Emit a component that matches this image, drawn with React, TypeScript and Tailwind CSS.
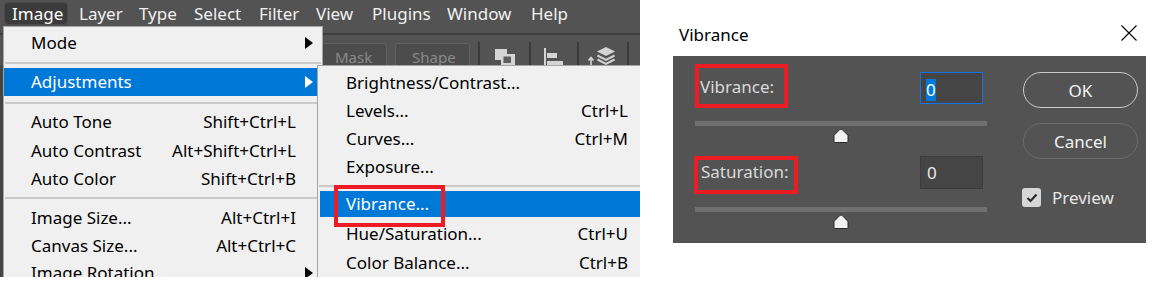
import type { ReactNode } from 'react';

const Arrow = ({ white }: { white?: boolean }) => (
  <svg width="8" height="12" viewBox="0 0 8 12">
    <polygon points="0,0 8,6 0,12" fill={white ? '#ffffff' : '#000000'} />
  </svg>
);

const Thumb = () => (
  <svg width="16" height="15" viewBox="0 0 16 15">
    <path
      d="M6.7 1.6 Q8 0.3 9.3 1.6 L15 7.4 V13.5 Q15 14.5 14 14.5 H2 Q1 14.5 1 13.5 V7.4 Z"
      fill="#f2f2f2"
      stroke="#2a2a2a"
      strokeWidth="1"
    />
  </svg>
);

type RowProps = {
  label: string;
  shortcut?: string;
  arrow?: boolean;
  active?: boolean;
  h: string;
};

const MenuRow = ({ label, shortcut, arrow, active, h }: RowProps) => (
  <div
    className={`${h} flex items-center pl-[27px] pr-[9px] ${
      active ? 'bg-[#0078d7] text-white' : 'text-black'
    }`}
  >
    <span className="flex-1 whitespace-nowrap">{label}</span>
    <span className="whitespace-nowrap">{shortcut}</span>
    <span className="w-[8px] ml-[9px] flex items-center">{arrow && <Arrow white={active} />}</span>
  </div>
);

const SubRow = ({ label, shortcut, h, children }: { label: string; shortcut?: string; h: string; children?: ReactNode }) => (
  <div className={`${h} flex items-center pl-[28px] pr-[18px] text-black`}>
    <span className="flex-1 whitespace-nowrap">{label}</span>
    <span className="whitespace-nowrap">{shortcut}</span>
    {children}
  </div>
);

const Sep = ({ h, top }: { h: string; top: string }) => (
  <div className={`${h} ${top}`}>
    <div className="h-[2px] mx-[1px] bg-[#cacaca]" />
  </div>
);

const barItems = [
  { t: 'Layer', w: 'w-[60px]' },
  { t: 'Type', w: 'w-[55px]' },
  { t: 'Select', w: 'w-[65px]' },
  { t: 'Filter', w: 'w-[57px]' },
  { t: 'View', w: 'w-[56px]' },
  { t: 'Plugins', w: 'w-[75px]' },
  { t: 'Window', w: 'w-[84px]' },
  { t: 'Help', w: 'w-[50px]' },
];

function PhotoshopMenu() {
  return (
    <div className="relative w-[640px] h-[277px] shrink-0 bg-[#535353] overflow-hidden flex flex-col">
      {/* menu bar */}
      <div className="h-[33px] flex items-start pt-[2px] pl-[4px] text-[17px] text-[#f0f0f0]">
        <span className="w-[64px] mr-[3px] h-[23px] flex items-center pl-[7px] rounded-[4px] bg-[#3b3b3b] border border-[#4b4b4b] text-white">
          Image
        </span>
        {barItems.map((b) => (
          <span key={b.t} className={`${b.w} h-[23px] flex items-center pl-[8px]`}>
            {b.t}
          </span>
        ))}
      </div>
      <div className="h-[2px] bg-[#3e3e3e]" />
      {/* options bar */}
      <div className="h-[30px] flex items-start pt-[8px] pl-[318px] overflow-hidden">
        <div className="w-[69px] h-[30px] rounded-[3px] border border-[#606060] bg-[#4c4c4c] pl-[16px] pt-[2px] text-[15px] leading-[22px] text-[#8a8a8a]">
          Mask
        </div>
        <div className="w-[75px] h-[30px] ml-[8px] rounded-[3px] border border-[#606060] bg-[#4c4c4c] pl-[16px] pt-[2px] text-[15px] leading-[22px] text-[#8a8a8a]">
          Shape
        </div>
        <div className="w-[2px] h-[30px] -mt-[1px] ml-[8px] bg-[#3a3a3a]" />
        <svg className="ml-[15px] mt-[6px]" width="20" height="17" viewBox="0 0 20 17">
          <rect x="0" y="0" width="12" height="11" fill="#d4d4d4" />
          <rect x="6" y="5" width="14" height="12" fill="#d4d4d4" />
          <rect x="8.5" y="7.5" width="7.5" height="6.5" fill="#5e5e5e" />
        </svg>
        <div className="w-[2px] h-[30px] -mt-[1px] ml-[14px] bg-[#3a3a3a]" />
        <svg className="ml-[13px] mt-[5px]" width="20" height="17" viewBox="0 0 20 17">
          <rect x="0" y="0" width="2" height="17" fill="#d4d4d4" />
          <rect x="3" y="5" width="10" height="5" fill="#d4d4d4" />
          <rect x="3" y="13" width="16" height="4" fill="#d4d4d4" />
        </svg>
        <div className="w-[2px] h-[30px] -mt-[1px] ml-[13px] bg-[#3a3a3a]" />
        <svg className="ml-[9px] mt-[3px]" width="29" height="20" viewBox="0 0 29 20">
          <path d="M3 19 V12 M0.5 14.5 L3 11.5 L5.5 14.5" stroke="#d4d4d4" strokeWidth="1.6" fill="none" />
          <path d="M18 1 L27 5.5 L18 10 L9 5.5 Z" fill="#d4d4d4" />
          <path d="M9.5 9.5 L18 13.8 L26.5 9.5" stroke="#d4d4d4" strokeWidth="2" fill="none" />
          <path d="M9.5 13.5 L18 17.8 L26.5 13.5" stroke="#d4d4d4" strokeWidth="2" fill="none" />
        </svg>
        <div className="w-[2px] h-[30px] -mt-[1px] ml-[10px] bg-[#3a3a3a]" />
      </div>
      <div className="flex-1 bg-[#454545]" />

      {/* Image menu */}
      <div className="absolute left-[3px] top-[26px] w-[320px] h-[270px] bg-[#f0f0f0] border border-[#a6a6a6] pt-[2px] text-[17px]">
        <MenuRow label="Mode" arrow h="h-[28px]" />
        <Sep h="h-[11px]" top="pt-[5px]" />
        <MenuRow label="Adjustments" arrow active h="h-[28px]" />
        <Sep h="h-[12px]" top="pt-[6px]" />
        <MenuRow label="Auto Tone" shortcut="Shift+Ctrl+L" h="h-[28px]" />
        <MenuRow label="Auto Contrast" shortcut="Alt+Shift+Ctrl+L" h="h-[29px]" />
        <MenuRow label="Auto Color" shortcut="Shift+Ctrl+B" h="h-[28px]" />
        <Sep h="h-[11px]" top="pt-[4px]" />
        <MenuRow label="Image Size..." shortcut="Alt+Ctrl+I" h="h-[28px]" />
        <MenuRow label="Canvas Size..." shortcut="Alt+Ctrl+C" h="h-[27px]" />
        <MenuRow label="Image Rotation" arrow h="h-[28px]" />
      </div>

      {/* Adjustments submenu */}
      <div className="absolute left-[317px] top-[65px] w-[330px] h-[220px] bg-[#f0f0f0] border border-[#a6a6a6] pt-[2px] text-[17px]">
        <SubRow label="Brightness/Contrast..." h="h-[29px]" />
        <SubRow label="Levels..." shortcut="Ctrl+L" h="h-[28px]" />
        <SubRow label="Curves..." shortcut="Ctrl+M" h="h-[28px]" />
        <SubRow label="Exposure..." h="h-[28px]" />
        <Sep h="h-[9px]" top="pt-[4px]" />
        <div className="h-[28px] py-[1px]">
          <div className="h-[26px] ml-[2px] flex items-center pl-[26px] bg-[#0078d7] text-white">Vibrance...</div>
        </div>
        <SubRow label="Hue/Saturation..." shortcut="Ctrl+U" h="h-[31px]" />
        <SubRow label="Color Balance..." shortcut="Ctrl+B" h="h-[28px]" />
        <div className="absolute left-[16px] top-[119px] w-[111px] h-[42px] border-4 border-[#ed1c24]" />
      </div>
    </div>
  );
}

function VibranceDialog() {
  return (
    <div className="ml-[33px] w-[473px] flex flex-col text-[17px]">
      <div className="h-[56px] flex items-center justify-between pl-[6px] pr-[9px] pt-[14px] text-black">
        <span>Vibrance</span>
        <svg className="-mt-[4px]" width="16" height="16" viewBox="0 0 16 16">
          <path d="M0.5 0.5 L15.5 15.5 M15.5 0.5 L0.5 15.5" stroke="#000" strokeWidth="1.1" />
        </svg>
      </div>
      <div className="h-[187px] bg-[#535353] flex pl-[22px] pt-[8px]">
        <div className="w-[292px] flex flex-col">
          <div className="flex items-start">
            <div className="relative w-[93px] h-[44px] pl-[5px] pt-[11px] leading-[24px] text-[#dadada]">
              Vibrance:
              <div className="absolute inset-0 border-4 border-[#ed1c24]" />
            </div>
            <div className="ml-auto mr-[4px] mt-[8px] w-[63px] h-[32px] border border-[#1473e6] bg-[#454545] pl-[5px] pt-[4px]">
              <span className="inline-block h-[22px] leading-[22px] bg-[#0078d7] text-white">0</span>
            </div>
          </div>
          <div className="mt-[13px] h-[5px] bg-[#707070]" />
          <div className="mt-[2px] ml-[138px]">
            <Thumb />
          </div>
          <div className="flex items-start mt-[13px]">
            <div className="relative -ml-[1px] w-[104px] h-[38px] pl-[7px] pt-[4px] leading-[24px] text-[#dadada]">
              Saturation:
              <div className="absolute inset-0 border-4 border-[#ed1c24]" />
            </div>
            <div className="ml-auto mr-[4px] w-[63px] h-[33px] border border-[#3c3c3c] bg-[#454545] pl-[6px] pt-[4px] leading-[24px] text-[#ececec]">
              0
            </div>
          </div>
          <div className="mt-[13px] h-[5px] bg-[#707070]" />
          <div className="mt-[2px] ml-[138px]">
            <Thumb />
          </div>
        </div>
        <div className="ml-[36px] w-[115px] flex flex-col">
          <div className="mt-[8px] h-[36px] rounded-full border-[1.5px] border-[#cbcbcb] flex items-center justify-center pt-[2px] text-[#f4f4f4]">
            OK
          </div>
          <div className="mt-[15px] h-[36px] rounded-full border-[1.5px] border-[#6c6c6c] flex items-center justify-center pt-[1px] text-[#f0f0f0]">
            Cancel
          </div>
          <div className="mt-[26px] -ml-[1px] flex items-center">
            <div className="w-[19px] h-[19px] rounded-[3px] bg-[#d6d6d6] flex items-center justify-center">
              <svg width="12" height="10" viewBox="0 0 12 10">
                <path d="M1.5 5 L4.5 8 L10.5 1.5" stroke="#2b2b2b" strokeWidth="2.2" fill="none" />
              </svg>
            </div>
            <span className="ml-[11px] text-[#e6e6e6]">Preview</span>
          </div>
        </div>
      </div>
    </div>
  );
}

export default function App() {
  return (
    <div className="w-[1173px] h-[286px] bg-white flex items-start overflow-hidden font-['Noto_Sans',sans-serif]">
      <PhotoshopMenu />
      <VibranceDialog />
    </div>
  );
}
